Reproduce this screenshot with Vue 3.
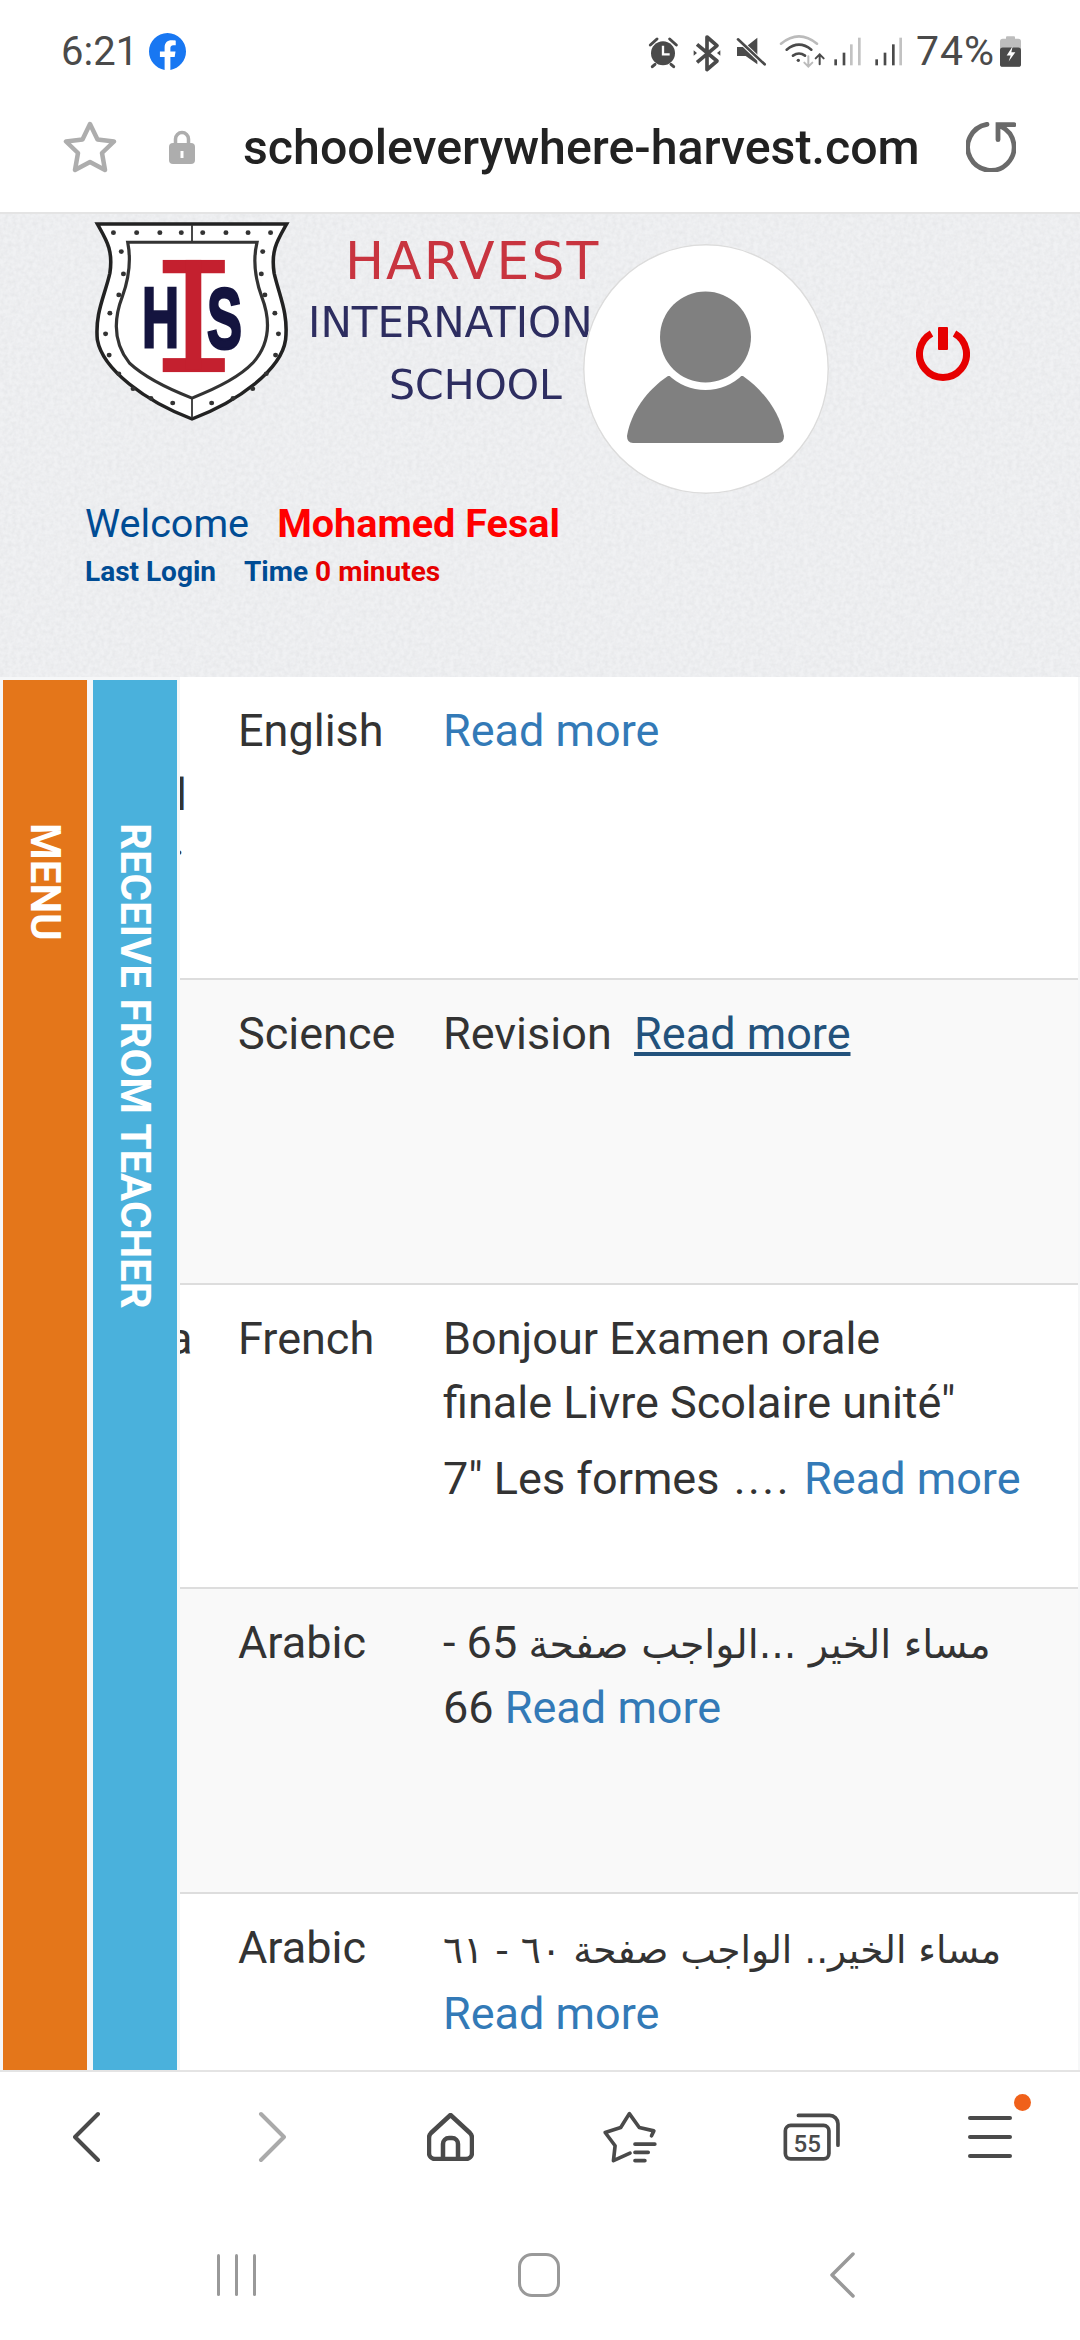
<script setup>
const rows = [
  { subject: 'English', clip: ['\u00a0', 'l', '.'] },
  { subject: 'Science', text: 'Revision\u00a0 ', active: true },
  { subject: 'French', clip: ['a'], lines: ['Bonjour Examen orale', 'finale Livre Scolaire unité"'], text: '7" Les formes ', dots: '....' },
  { subject: 'Arabic', arabic: 'مساء الخير ...الواجب صفحة', text: ' 65 - 66 ' },
  { subject: 'Arabic', arabic: 'مساء الخير.. الواجب صفحة ٦٠ - ٦١ ', small: true }
];

const dots = [
  [150, 68], [215, 68], [280, 68], [340, 68], [400, 68], [465, 68], [527, 68], [590, 68],
  [172, 125], [178, 192], [165, 255], [140, 310], [128, 372], [138, 436], [165, 492], [205, 537],
  [255, 566], [316, 580], [425, 580], [485, 566], [540, 537], [578, 492], [604, 436], [612, 372],
  [602, 310], [574, 255], [564, 192], [568, 125]
];
</script>

<template>
  <div class="phone">
    <!-- status bar -->
    <div class="status">
      <span class="time">6:21</span>
      <svg class="fb" viewBox="0 0 24 24" width="37" height="37">
        <path fill="#1877f2" d="M24 12.073c0-6.627-5.373-12-12-12s-12 5.373-12 12c0 5.99 4.388 10.954 10.125 11.854v-8.385H7.078v-3.47h3.047V9.43c0-3.007 1.792-4.669 4.533-4.669 1.312 0 2.686.235 2.686.235v2.953H15.83c-1.491 0-1.956.925-1.956 1.874v2.25h3.328l-.532 3.47h-2.796v8.385C19.612 23.027 24 18.062 24 12.073z" />
      </svg>
      <svg class="status-icons" viewBox="0 0 825 180" width="275" height="60">
        <!-- alarm -->
        <g stroke="#4a4a4a" stroke-linecap="round" fill="none">
          <path stroke-width="9" d="M22 72 42 54M80 54l20 18M36 130l-8 7M84 130l8 7" />
        </g>
        <circle cx="60" cy="97" r="36" fill="#4a4a4a" />
        <path d="M60 74v26h20" stroke="#fff" stroke-width="7" fill="none" />
        <!-- bluetooth -->
        <path d="M162 70 222 120 192 146V48l30 26-60 50" stroke="#4a4a4a" stroke-width="11" fill="none" stroke-linejoin="round" />
        <path d="M152 88l10 8-10 8zM232 88l-10 8 10 8z" fill="#4a4a4a" />
        <!-- muted speaker -->
        <path d="M282 78h26l35-28v80l-35-25h-26z" fill="#4a4a4a" />
        <path d="M280 50l88 84" stroke="#fff" stroke-width="14" />
        <path d="M285 55l80 75" stroke="#4a4a4a" stroke-width="8" stroke-linecap="round" />
        <!-- wifi -->
        <g fill="none" stroke-linecap="round">
          <path d="M414 68q54-44 108 0" stroke="#bbb" stroke-width="8" />
          <path d="M431 86q37-30 74 0M450 104q18-13 36 0" stroke="#4a4a4a" stroke-width="8" />
          <path d="M496 106v30M484 125l12 12 12-12" stroke="#bbb" stroke-width="6" />
          <path d="M530 130v-30M518 112l12-12 12 12" stroke="#4a4a4a" stroke-width="6" />
        </g>
        <circle cx="466" cy="118" r="5" fill="#4a4a4a" />
        <!-- signal -->
        <g fill="#4a4a4a">
          <rect x="574" y="115" width="8" height="18" />
          <rect x="599" y="95" width="8" height="38" />
          <rect x="697" y="115" width="8" height="18" />
          <rect x="722" y="95" width="8" height="38" />
          <rect x="747" y="70" width="8" height="63" />
        </g>
        <g fill="#c2c2c2">
          <rect x="621" y="70" width="8" height="63" />
          <rect x="645" y="50" width="8" height="83" />
          <rect x="769" y="50" width="8" height="83" />
        </g>
      </svg>
      <span class="pct">74%</span>
      <svg class="battery" viewBox="0 0 63 92" width="21" height="31">
        <rect x="18" width="27" height="12" rx="3" fill="#bdbdbd" />
        <rect y="8" width="63" height="84" rx="8" fill="#bdbdbd" />
        <rect y="34" width="63" height="58" rx="8" fill="#4a4a4a" />
        <path d="M38 30 20 58h12l-6 18 20-28H34z" fill="#fff" />
      </svg>
    </div>

    <!-- url bar -->
    <div class="urlbar">
      <svg viewBox="0 0 54 52" width="54" height="52">
        <path d="M27 3l7.5 15.5L51 20.5 39 32l3 17-15-8-15 8 3-17L3 20.5l16.500-2z" fill="none" stroke="#adadad" stroke-width="4.500" stroke-linejoin="round" />
      </svg>
      <svg class="lock" viewBox="0 0 26 34" width="26" height="34">
        <path d="M6.500 15V9a6.500 6.500 0 0 1 13 0v6" fill="none" stroke="#adadad" stroke-width="3.500" />
        <rect y="13" width="26" height="21" rx="4" fill="#adadad" />
        <path d="M11.500 21h3v7h-3z" fill="#fff" />
      </svg>
      <span class="url">schooleverywhere-harvest.com</span>
      <svg class="reload" viewBox="0 0 50 50" width="50" height="50">
        <path d="M21 2.300A23.200 23.200 0 1 0 35 4.300M48 2.700H32V17.700" fill="none" stroke="#6a6a6a" stroke-width="4.800" stroke-linecap="round" />
      </svg>
    </div>

    <!-- school header -->
    <div class="header">
      <div class="top-row">
        <svg class="shield" viewBox="90 30 560 610" width="200" height="203" preserveAspectRatio="none">
          <path d="M105 42H635C610 90 590 120 600 190 615 260 640 310 632 390 620 480 500 575 370 628 240 575 120 480 105 390 98 310 125 260 140 190 150 120 130 90 105 42Z" fill="#fff" stroke="#222" stroke-width="10" />
          <path d="M190 97H552C540 150 545 200 565 260 590 330 590 400 540 460 500 505 430 540 370 565 310 540 240 505 195 460 150 400 150 330 175 260 195 200 200 150 190 97Z" fill="#fff" stroke="#333" stroke-width="9" />
          <path d="M370 44V95M370 566V626" stroke="#333" stroke-width="5" />
          <circle v-for="d in dots" :key="d[0] + '-' + d[1]" :cx="d[0]" :cy="d[1]" r="7" fill="#333" />
          <g fill="#c4202f">
            <rect x="288" y="150" width="174" height="40" />
            <rect x="288" y="445" width="174" height="42" />
            <rect x="352" y="150" width="44" height="330" />
          </g>
          <text x="230" y="412" class="crest" textLength="104" lengthAdjust="spacingAndGlyphs">H</text>
          <text x="412" y="414" class="crest" textLength="98" lengthAdjust="spacingAndGlyphs">S</text>
        </svg>
        <div class="logo-text">
          <span class="harvest">HARVEST</span>
          <span class="inter">INTERNATION</span>
          <span class="school">SCHOOL</span>
        </div>
        <div class="avatar">
          <svg viewBox="0 0 246 250" width="246" height="250">
            <path d="M44 192C48 168 64 146 85 132H160C180 146 197 168 201 192Q201 199 195 199H50Q44 199 44 192Z" fill="#808080" />
            <circle cx="122.500" cy="93" r="53" fill="#fff" />
            <circle cx="122.500" cy="93" r="45.500" fill="#808080" />
          </svg>
        </div>
        <svg class="power" viewBox="0 0 54 54" width="54" height="54">
          <path d="M15.500 6.500A23.500 23.500 0 1 0 38.500 6.500" fill="none" stroke="#e60000" stroke-width="7" />
          <rect x="22" y="0" width="10" height="23" rx="1" fill="#e60000" />
        </svg>
      </div>
      <div class="greeting">
        <div class="welcome"><span>Welcome</span><strong>Mohamed Fesal</strong></div>
        <div class="last-login"><span>Last Login</span><span>Time <em>0 minutes</em></span></div>
      </div>
    </div>

    <!-- tabs and list -->
    <div class="main">
      <div class="tab tab-menu"><span>MENU</span></div>
      <div class="tab tab-receive"><span>RECEIVE FROM TEACHER</span></div>
      <div class="list">
        <div v-for="(row, i) in rows" :key="i" class="row" :class="{ odd: i % 2 === 1 }">
          <div class="clip" :class="{ shift: row.clip && row.clip[0] === 'a' }">
            <div v-for="(c, j) in row.clip" :key="j">{{ c }}</div>
          </div>
          <div class="subject">{{ row.subject }}</div>
          <div class="body">
            <div v-for="l in row.lines" :key="l">{{ l }}</div>
            <div :class="{ para: row.lines }">
              <span v-if="row.arabic" class="arabic" :class="{ small: row.small }">{{ row.arabic }}</span>{{ row.text }}<span v-if="row.dots" class="dots">{{ row.dots }}</span><a :class="{ active: row.active }">Read more</a>
            </div>
          </div>
        </div>
      </div>
    </div>

    <!-- browser toolbar -->
    <div class="toolbar">
      <div class="tool back">
        <svg viewBox="0 0 28 52" width="28" height="52"><path d="M25 3 2 26l23 23" class="ln thin" /></svg>
      </div>
      <div class="tool forward">
        <svg viewBox="0 0 28 52" width="28" height="52"><path d="M3 3l23 23L3 49" class="ln thin off" /></svg>
      </div>
      <div class="tool">
        <svg viewBox="0 0 47 48" width="47" height="48">
          <path d="M23.500 2 43 20q2 2 2 5v15a6 6 0 0 1-6 6H8a6 6 0 0 1-6-6V25q0-3 2-5zM16 46V31a6 6 0 0 1 6-6h3a6 6 0 0 1 6 6v15" class="ln" />
        </svg>
      </div>
      <div class="tool">
        <svg viewBox="60 80 180 160" width="60" height="53">
          <path d="M215 155l7-15-44-10-30-42-26 42-47 15 30 40-5 45 50-23M165 180h60M165 205h40M165 230h30" fill="none" stroke="#4a4a4a" stroke-width="11" stroke-linecap="round" stroke-linejoin="round" />
        </svg>
      </div>
      <div class="tool tabs">
        <svg viewBox="600 80 185 155" width="62" height="52">
          <rect x="613" y="123" width="130" height="100" rx="16" fill="none" stroke="#4a4a4a" stroke-width="11" />
          <path d="M652 93h93a25 25 0 0 1 25 25v64" fill="none" stroke="#4a4a4a" stroke-width="11" stroke-linecap="round" />
          <text x="678" y="202" class="tab-count" text-anchor="middle">55</text>
        </svg>
      </div>
      <div class="tool menu-tool">
        <span class="bar"></span>
        <span class="bar"></span>
        <span class="bar"></span>
        <span class="dot"></span>
      </div>
    </div>

    <!-- system nav -->
    <div class="sysnav">
      <div class="recents"><span></span><span></span><span></span></div>
      <div class="sys-home"></div>
      <svg class="sys-back" viewBox="0 0 25 46" width="25" height="46"><path d="M23 2 2 23l21 21" fill="none" stroke="#999" stroke-width="3.500" stroke-linecap="round" stroke-linejoin="round" /></svg>
    </div>
  </div>
</template>

<style>
html,
body {
  margin: 0;
  background: #fff;
}
</style>

<style scoped>
.phone {
  width: 1080px;
  height: 2340px;
  display: flex;
  flex-direction: column;
  overflow: hidden;
  background: #fff;
  font-family: Roboto, "DejaVu Sans", sans-serif;
}

.status {
  height: 100px;
  display: flex;
  align-items: center;
  padding: 2px 59px 0 61px;
  box-sizing: border-box;
  color: #4a4a4a;
  flex-shrink: 0;
}
.time {
  font-size: 40px;
  margin-right: 11px;
}
.status-icons {
  margin-left: auto;
}
.pct {
  font-size: 41px;
  letter-spacing: 1px;
  margin: 0 5px 0 -2px;
}

.urlbar {
  height: 114px;
  display: flex;
  align-items: center;
  padding: 0 64px 18px 63px;
  box-sizing: border-box;
  border-bottom: 2px solid #e4e4e4;
  flex-shrink: 0;
}
.lock {
  margin-left: 52px;
}
.url {
  margin-left: 48px;
  font-size: 48.300px;
  font-weight: 500;
  color: #222;
  white-space: nowrap;
}
.reload {
  margin-left: auto;
}

.header {
  height: 463px;
  flex-shrink: 0;
  background-color: #f0f1f3;
  background-image: url("data:image/svg+xml,%3Csvg xmlns='http://www.w3.org/2000/svg' width='300' height='300'%3E%3Cfilter id='n'%3E%3CfeTurbulence type='fractalNoise' baseFrequency='.24' numOctaves='2'/%3E%3CfeColorMatrix values='0 0 0 0 .6 0 0 0 0 .61 0 0 0 0 .63 0 0 0 .45 -.13'/%3E%3C/filter%3E%3Crect width='300' height='300' filter='url(%23n)'/%3E%3C/svg%3E");
}
.top-row {
  display: flex;
  align-items: flex-start;
  padding-left: 92px;
}
.shield {
  margin-top: 6px;
  flex-shrink: 0;
  filter: blur(0.5px);
}
.crest {
  font-family: "Liberation Sans", sans-serif;
  font-weight: 700;
  font-size: 258px;
  fill: #14143f;
  stroke: #14143f;
  stroke-width: 9px;
}
.logo-text {
  width: 275px;
  margin-left: 16px;
  margin-top: 16px;
  flex-shrink: 0;
  display: flex;
  flex-direction: column;
  font-family: "DejaVu Sans", sans-serif;
  white-space: nowrap;
  color: #2d2d60;
  filter: blur(0.4px);
}
.logo-text span {
  line-height: 62px;
  font-size: 41px;
}
.logo-text .inter {
  font-size: 42px;
}
.logo-text .harvest {
  font-size: 52px;
  letter-spacing: 2px;
  margin-left: 37px;
  color: #c8343f;
}
.logo-text .school {
  margin-left: 81px;
}
.avatar {
  position: relative;
  z-index: 1;
  margin-top: 30px;
  width: 246px;
  height: 250px;
  box-sizing: border-box;
  border-radius: 50%;
  background: #fff;
  box-shadow: 0 0 0 1.500px #dcdcdc inset;
  flex-shrink: 0;
}
.power {
  margin: 113px 0 0 87px;
}
.greeting {
  margin-top: 5px;
  padding-left: 85px;
}
.welcome {
  display: flex;
  gap: 28px;
  font-size: 39.600px;
  line-height: 50px;
  color: #004c94;
}
.welcome strong {
  color: #f00;
}
.last-login {
  display: flex;
  gap: 28px;
  margin-top: 1px;
  font-size: 28px;
  line-height: 44px;
  font-weight: 700;
  color: #004c94;
}
.last-login em {
  font-style: normal;
  color: #e60000;
}

.main {
  height: 1393px;
  flex-shrink: 0;
  display: flex;
  overflow: hidden;
  padding: 0 2px 0 3px;
  box-sizing: border-box;
  background: #f6f7f8;
}
.tab {
  width: 84px;
  margin-top: 3px;
  padding-top: 143px;
  box-sizing: border-box;
  display: flex;
  justify-content: center;
  color: #fff;
  font-size: 42px;
  font-weight: 700;
  flex-shrink: 0;
}
.tab span {
  writing-mode: vertical-rl;
}
.tab-menu {
  background: #e4761a;
}
.tab-receive {
  margin-left: 6px;
  background: #4ab1dc;
}
.list {
  margin-left: 3px;
  flex: 1;
  min-width: 0;
  background: #fff;
}

.row {
  height: 304.500px;
  box-sizing: border-box;
  display: flex;
  padding-top: 22px;
  border-bottom: 2px solid #ddd;
  font-size: 45px;
  line-height: 64px;
  color: #333;
  background: #fff;
}
.row:first-child {
  height: 303px;
}
.row:last-child {
  border-bottom: 0;
}
.row.odd {
  background: #f9f9f9;
}
.clip {
  width: 58px;
  overflow: hidden;
  flex-shrink: 0;
}
.clip div {
  margin-left: -4px;
}
.clip div:nth-child(3) {
  line-height: 26px;
  margin-left: -7px;
}
.clip.shift div {
  margin-left: -12px;
}
.subject {
  width: 205px;
  flex-shrink: 0;
}
.body {
  width: 590px;
}
.para {
  margin-top: 12px;
}
.arabic {
  font-family: "DejaVu Sans", sans-serif;
  font-size: 39.500px;
}
.arabic.small {
  font-size: 37.600px;
}
.dots {
  letter-spacing: 2.500px;
  margin: 0 13px 0 3px;
}
.body a {
  color: #337ab7;
}
.body a.active {
  color: #23527c;
  text-decoration: underline;
}

.toolbar {
  height: 138px;
  flex-shrink: 0;
  border-top: 2px solid #e4e4e4;
  display: flex;
}
.tool {
  width: 180px;
  display: flex;
  justify-content: center;
  align-items: center;
  padding-bottom: 8px;
  box-sizing: border-box;
}
.tool.back {
  padding-right: 6px;
}
.tool.forward {
  padding-left: 4px;
}
.tool.tabs {
  padding-left: 3px;
}
.ln {
  fill: none;
  stroke: #4a4a4a;
  stroke-width: 4.500px;
  stroke-linecap: round;
  stroke-linejoin: round;
}
.ln.thin {
  stroke-width: 4px;
}
.ln.off {
  stroke: #aaa;
}
.tab-count {
  font-size: 72px;
  font-weight: 500;
  fill: #4a4a4a;
}
.menu-tool {
  position: relative;
  flex-direction: column;
  gap: 14.500px;
}
.bar {
  width: 44px;
  height: 4.500px;
  border-radius: 2px;
  background: #4a4a4a;
}
.dot {
  position: absolute;
  left: 114px;
  top: 22px;
  width: 17px;
  height: 17px;
  border-radius: 50%;
  background: #f0611a;
}

.sysnav {
  flex: 1;
  display: flex;
  align-items: center;
  padding-left: 217px;
}
.recents {
  display: flex;
  gap: 15px;
}
.recents span {
  width: 3px;
  height: 42px;
  border-radius: 2px;
  background: #999;
}
.sys-home {
  margin-left: 262px;
  width: 42px;
  height: 44px;
  box-sizing: border-box;
  border: 3.500px solid #999;
  border-radius: 14px;
}
.sys-back {
  margin-left: 270px;
}
</style>
